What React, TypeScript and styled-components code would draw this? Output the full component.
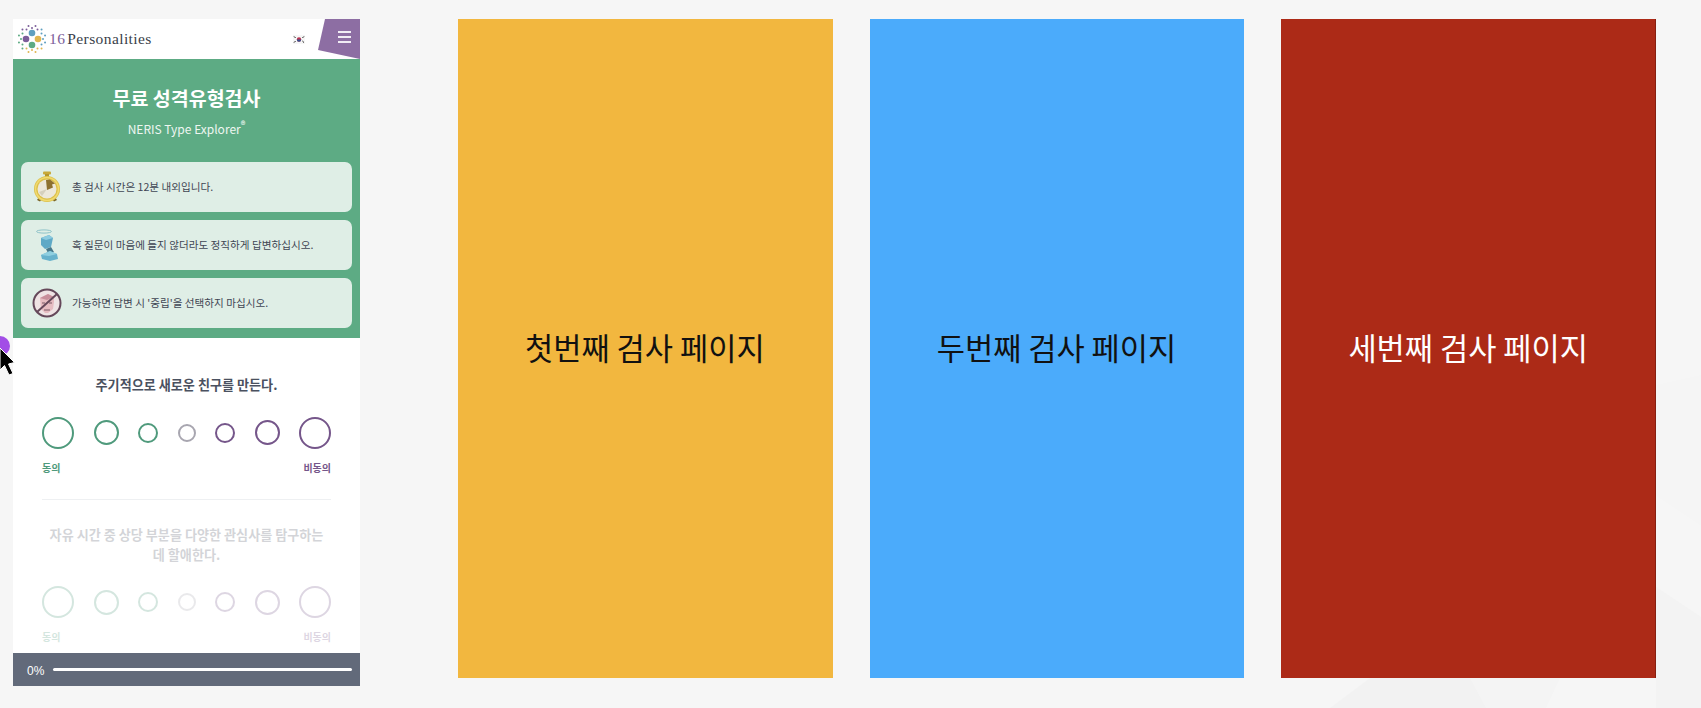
import React from 'react'
import styled, { createGlobalStyle } from 'styled-components'

const GlobalStyle = createGlobalStyle`
  html, body {
    margin: 0;
    padding: 0;
    height: 100%;
    background: #f6f6f6;
    overflow: hidden;
  }
  body {
    font-family: "Noto Sans CJK KR", "Noto Sans", sans-serif;
  }
  * {
    box-sizing: border-box;
  }
`

const SCALE = [
  { size: 32, border: '#4f9a7c' },
  { size: 25, border: '#4f9a7c' },
  { size: 20, border: '#4f9a7c' },
  { size: 18, border: '#a8a6b0' },
  { size: 20, border: '#75568a' },
  { size: 25, border: '#75568a' },
  { size: 32, border: '#75568a' },
]

const DOT_COLORS = ['#5f9fc0', '#e0b650', '#5dab84', '#7c5e9a']

function Logo() {
  const dots = []
  for (let i = 0; i < 24; i++) {
    const a = (i / 24) * Math.PI * 2 - Math.PI / 4
    const r = i % 2 === 0 ? 13.500 : 11
    dots.push(
      <circle
        key={i}
        cx={15 + Math.cos(a) * r}
        cy={15 + Math.sin(a) * r}
        r={1}
        fill={DOT_COLORS[Math.floor(i / 6)]}
      />
    )
  }
  return (
    <svg width="30" height="30" viewBox="0 0 30 30">
      {dots}
      <circle cx="15" cy="9" r="3.300" fill="#5f9fc0" />
      <circle cx="9" cy="15" r="3.300" fill="#7c5e9a" />
      <circle cx="21" cy="15" r="3.300" fill="#e0b650" />
      <circle cx="15" cy="21" r="3.300" fill="#5dab84" />
    </svg>
  )
}

function Flag() {
  return (
    <svg width="12" height="9" viewBox="0 0 12 9">
      <rect width="12" height="9" fill="#f6f6f6" />
      <circle cx="6" cy="4.500" r="2.200" fill="#b8324f" />
      <path d="M3.800 4.500a2.200 2.200 0 0 0 4.400 0z" fill="#36508f" />
      <path d="M1 1.400l1.600 1.600M1 7.600l1.600-1.600M11 1.400L9.400 3M11 7.600L9.400 6" stroke="#222" strokeWidth="1" />
    </svg>
  )
}

function WatchIcon() {
  return (
    <svg width="30" height="32" viewBox="0 0 30 32">
      <rect x="11" y="0.500" width="8" height="3" rx="1" fill="#c8a93a" />
      <rect x="13" y="3" width="4" height="3" fill="#b4962e" />
      <path d="M5 29l2-3 3 2-2 2.500zM25 29l-2-3-3 2 2 2.500z" fill="#7a6526" />
      <circle cx="15" cy="18" r="13" fill="#dcc04a" />
      <circle cx="15" cy="18" r="11.500" fill="none" stroke="#f0da70" strokeWidth="1.500" />
      <circle cx="15" cy="18" r="9.500" fill="#ece8da" />
      <path d="M15 19l-1-10 4-.500 5 4-3 1 1 3z" fill="#8d7130" />
      <path d="M15 18l-8 3 3 4z" fill="#d5d0bd" />
    </svg>
  )
}

function StatueIcon() {
  return (
    <svg width="24" height="32" viewBox="0 0 24 32">
      <ellipse cx="9" cy="2.500" rx="7.500" ry="1.600" fill="none" stroke="#8fc3c9" strokeWidth="1" />
      <path d="M6 9l8-3 4 3-2 9-6 2-4-4z" fill="#5fa9c6" />
      <path d="M6 9l8-3 4 3-7 2z" fill="#8ccbe0" />
      <path d="M11 20l5-2 3 5-6 1z" fill="#47788a" />
      <path d="M6 26l9-4 7 3 1 5-8 2-8-2z" fill="#67b2cc" />
      <path d="M6 26l9-4 7 3-8 2z" fill="#8fcfe0" />
    </svg>
  )
}

function NoNeutralIcon() {
  return (
    <svg width="30" height="30" viewBox="0 0 30 30">
      <circle cx="15" cy="15" r="13.500" fill="#efe3e4" stroke="#65485a" strokeWidth="2" />
      <path d="M8 10l8-4 6 3v5l-1 7-5 4h-3l-4-4z" fill="#e6bcc1" />
      <path d="M8 10l8-4 6 3-7 3z" fill="#c88f9b" />
      <path d="M10 15h3M17 15h3M12 22h6" stroke="#7a5a66" strokeWidth="1" />
      <path d="M5 24L25 6" stroke="#65485a" strokeWidth="2" />
    </svg>
  )
}

function Cursor() {
  return (
    <CursorMark width="28" height="46" viewBox="0 0 28 46">
      <circle cx="0" cy="10" r="10" fill="#a24ee6" />
      <path d="M0 12l14.500 14.500-6 1.500 4.500 9.500-4 1.500-4.500-9.500-4.500 4.500z" fill="#000" stroke="#fff" strokeWidth="1" />
    </CursorMark>
  )
}

function Backdrop() {
  return (
    <BackdropArt viewBox="0 0 1701 708" preserveAspectRatio="none">
      <path d="M1330 708l40-30h145l25 30z" fill="#f2f2f2" />
      <path d="M1470 678h90l-14 30h-60z" fill="#f4f4f4" />
      <path d="M1656 587l45 30v91h-45z" fill="#f3f3f3" />
      <path d="M1656 495l45 30v-150l-45 10z" fill="#f5f5f5" />
    </BackdropArt>
  )
}

function LikertScale() {
  return (
    <>
      <CircleRow>
        {SCALE.map((c, i) => (
          <Circle key={i} $size={c.size} $border={c.border} />
        ))}
      </CircleRow>
      <LabelRow>
        <ScaleLabel $color="#4f9a7c">동의</ScaleLabel>
        <ScaleLabel $color="#75568a">비동의</ScaleLabel>
      </LabelRow>
    </>
  )
}

export default function App() {
  const tips = [
    { icon: <WatchIcon />, text: '총 검사 시간은 12분 내외입니다.' },
    { icon: <StatueIcon />, text: '혹 질문이 마음에 들지 않더라도 정직하게 답변하십시오.' },
    { icon: <NoNeutralIcon />, text: "가능하면 답변 시 '중립'을 선택하지 마십시오." },
  ]
  const pages = [
    { label: '첫번째 검사 페이지', bg: '#f2b73f', color: '#111', edge: '#f2b73f' },
    { label: '두번째 검사 페이지', bg: '#4babfb', color: '#111', edge: '#4babfb' },
    { label: '세번째 검사 페이지', bg: '#ac2a17', color: '#fff', edge: '#861f10' },
  ]

  return (
    <Page>
      <GlobalStyle />
      <Backdrop />
      <Cursor />
      <Phone>
        <Header>
          <Brand>
            <Logo />
            <BrandName>
              <BrandNumber>16</BrandNumber>Personalities
            </BrandName>
          </Brand>
          <Flag />
          <MenuCorner>
            <MenuLine />
            <MenuLine />
            <MenuLine />
          </MenuCorner>
        </Header>
        <Hero>
          <HeroTitle>무료 성격유형검사</HeroTitle>
          <HeroSub>
            NERIS Type Explorer<sup>®</sup>
          </HeroSub>
          <TipList>
            {tips.map((tip) => (
              <Tip key={tip.text}>
                <TipIcon>{tip.icon}</TipIcon>
                <span>{tip.text}</span>
              </Tip>
            ))}
          </TipList>
        </Hero>
        <Questions>
          <Question>
            <QuestionText>주기적으로 새로운 친구를 만든다.</QuestionText>
            <LikertScale />
          </Question>
          <Divider />
          <Question $faded>
            <QuestionText>자유 시간 중 상당 부분을 다양한 관심사를 탐구하는 데 할애한다.</QuestionText>
            <LikertScale />
          </Question>
        </Questions>
        <Progress>
          <Percent>0%</Percent>
          <Track />
        </Progress>
      </Phone>
      <Panels>
        {pages.map((p) => (
          <Panel key={p.label} $bg={p.bg} $color={p.color} $edge={p.edge}>
            {p.label}
          </Panel>
        ))}
      </Panels>
    </Page>
  )
}

const Page = styled.div`
  position: relative;
  width: 1701px;
  height: 708px;
  padding: 19px 45px 0 13px;
  display: flex;
  align-items: flex-start;
  gap: 98px;
  overflow: hidden;
`

const BackdropArt = styled.svg`
  position: absolute;
  inset: 0;
  width: 100%;
  height: 100%;
`

const CursorMark = styled.svg`
  position: absolute;
  left: 0;
  top: 336px;
  z-index: 5;
`

const Phone = styled.div`
  position: relative;
  flex: 0 0 347px;
  height: 667px;
  display: flex;
  flex-direction: column;
  background: #fff;
`

const Header = styled.div`
  position: relative;
  height: 40px;
  flex: none;
  display: flex;
  align-items: center;
  padding: 0 55px 0 4px;
  justify-content: space-between;
  background: #fff;
`

const Brand = styled.div`
  display: flex;
  align-items: center;
  gap: 2px;
`

const BrandName = styled.div`
  font-family: "Liberation Serif", serif;
  font-size: 15.500px;
  color: #3a3f4a;
  letter-spacing: 0.400px;
`

const BrandNumber = styled.span`
  color: #7c5e9a;
  margin-right: 2px;
`

const MenuCorner = styled.div`
  position: absolute;
  top: 0;
  right: 0;
  width: 42px;
  height: 40px;
  padding: 12px 9px 0 20px;
  display: flex;
  flex-direction: column;
  gap: 3.500px;
  background: #8d6ea3;
  clip-path: polygon(7px 0, 100% 0, 100% 100%, 0 31px);
`

const MenuLine = styled.span`
  height: 1.500px;
  background: #f1ecf4;
`

const Hero = styled.div`
  flex: none;
  height: 279px;
  padding: 25px 8px 10px;
  background: #5dab84;
  display: flex;
  flex-direction: column;
  align-items: center;
  color: #fff;
`

const HeroTitle = styled.h1`
  margin: 0;
  font-size: 19.500px;
  line-height: 28px;
  font-weight: 700;
`

const HeroSub = styled.div`
  margin-top: 8px;
  font-size: 12px;
  line-height: 18px;
  color: #eef6f1;

  sup {
    font-size: 9px;
    line-height: 0;
    font-weight: 700;
  }
`

const TipList = styled.div`
  margin-top: auto;
  width: 100%;
  display: flex;
  flex-direction: column;
  gap: 7.500px;
`

const Tip = styled.div`
  height: 50.500px;
  display: flex;
  align-items: center;
  background: #dfeee6;
  border-radius: 7px;
  font-size: 10.600px;
  color: #3f4654;
`

const TipIcon = styled.div`
  flex: 0 0 51px;
  display: flex;
  justify-content: center;
`

const Questions = styled.div`
  flex: 1;
  min-height: 0;
  padding: 0 29px;
  overflow: hidden;
  background: #fff;
`

const Question = styled.div<{ $faded?: boolean }>`
  padding-top: ${(p) => (p.$faded ? '25px' : '37px')};
  opacity: ${(p) => (p.$faded ? 0.24 : 1)};
`

const QuestionText = styled.div`
  font-size: 13.100px;
  line-height: 19.500px;
  font-weight: 700;
  color: #4a5160;
  text-align: center;
  padding: 0 4px;
`

const CircleRow = styled.div`
  margin-top: 22px;
  height: 32px;
  display: flex;
  align-items: center;
  justify-content: space-between;
`

const Circle = styled.div<{ $size: number; $border: string }>`
  width: ${(p) => p.$size}px;
  height: ${(p) => p.$size}px;
  border: 2px solid ${(p) => p.$border};
  border-radius: 50%;
  background: #fff;
`

const LabelRow = styled.div`
  margin-top: 11px;
  display: flex;
  justify-content: space-between;
`

const ScaleLabel = styled.span<{ $color: string }>`
  font-size: 10px;
  line-height: 15px;
  font-weight: 700;
  color: ${(p) => p.$color};
`

const Divider = styled.div`
  margin-top: 24px;
  height: 1.500px;
  background: #eef0f2;
`

const Progress = styled.div`
  flex: none;
  height: 33px;
  padding: 0 8px 0 14px;
  display: flex;
  align-items: center;
  gap: 9px;
  background: #626a7a;
`

const Percent = styled.span`
  padding-top: 2px;
  font-family: "Liberation Sans", sans-serif;
  font-size: 12px;
  color: #fff;
`

const Track = styled.div`
  flex: 1;
  height: 3px;
  border-radius: 2px;
  background: #fff;
`

const Panels = styled.div`
  position: relative;
  flex: 1;
  display: flex;
  gap: 37px;
`

const Panel = styled.div<{ $bg: string; $color: string; $edge: string }>`
  flex: 1;
  height: 659px;
  padding-bottom: 4px;
  display: flex;
  align-items: center;
  justify-content: center;
  background: ${(p) => p.$bg};
  color: ${(p) => p.$color};
  border-right: 1px solid ${(p) => p.$edge};
  font-size: 30.700px;
  font-weight: 400;
`
